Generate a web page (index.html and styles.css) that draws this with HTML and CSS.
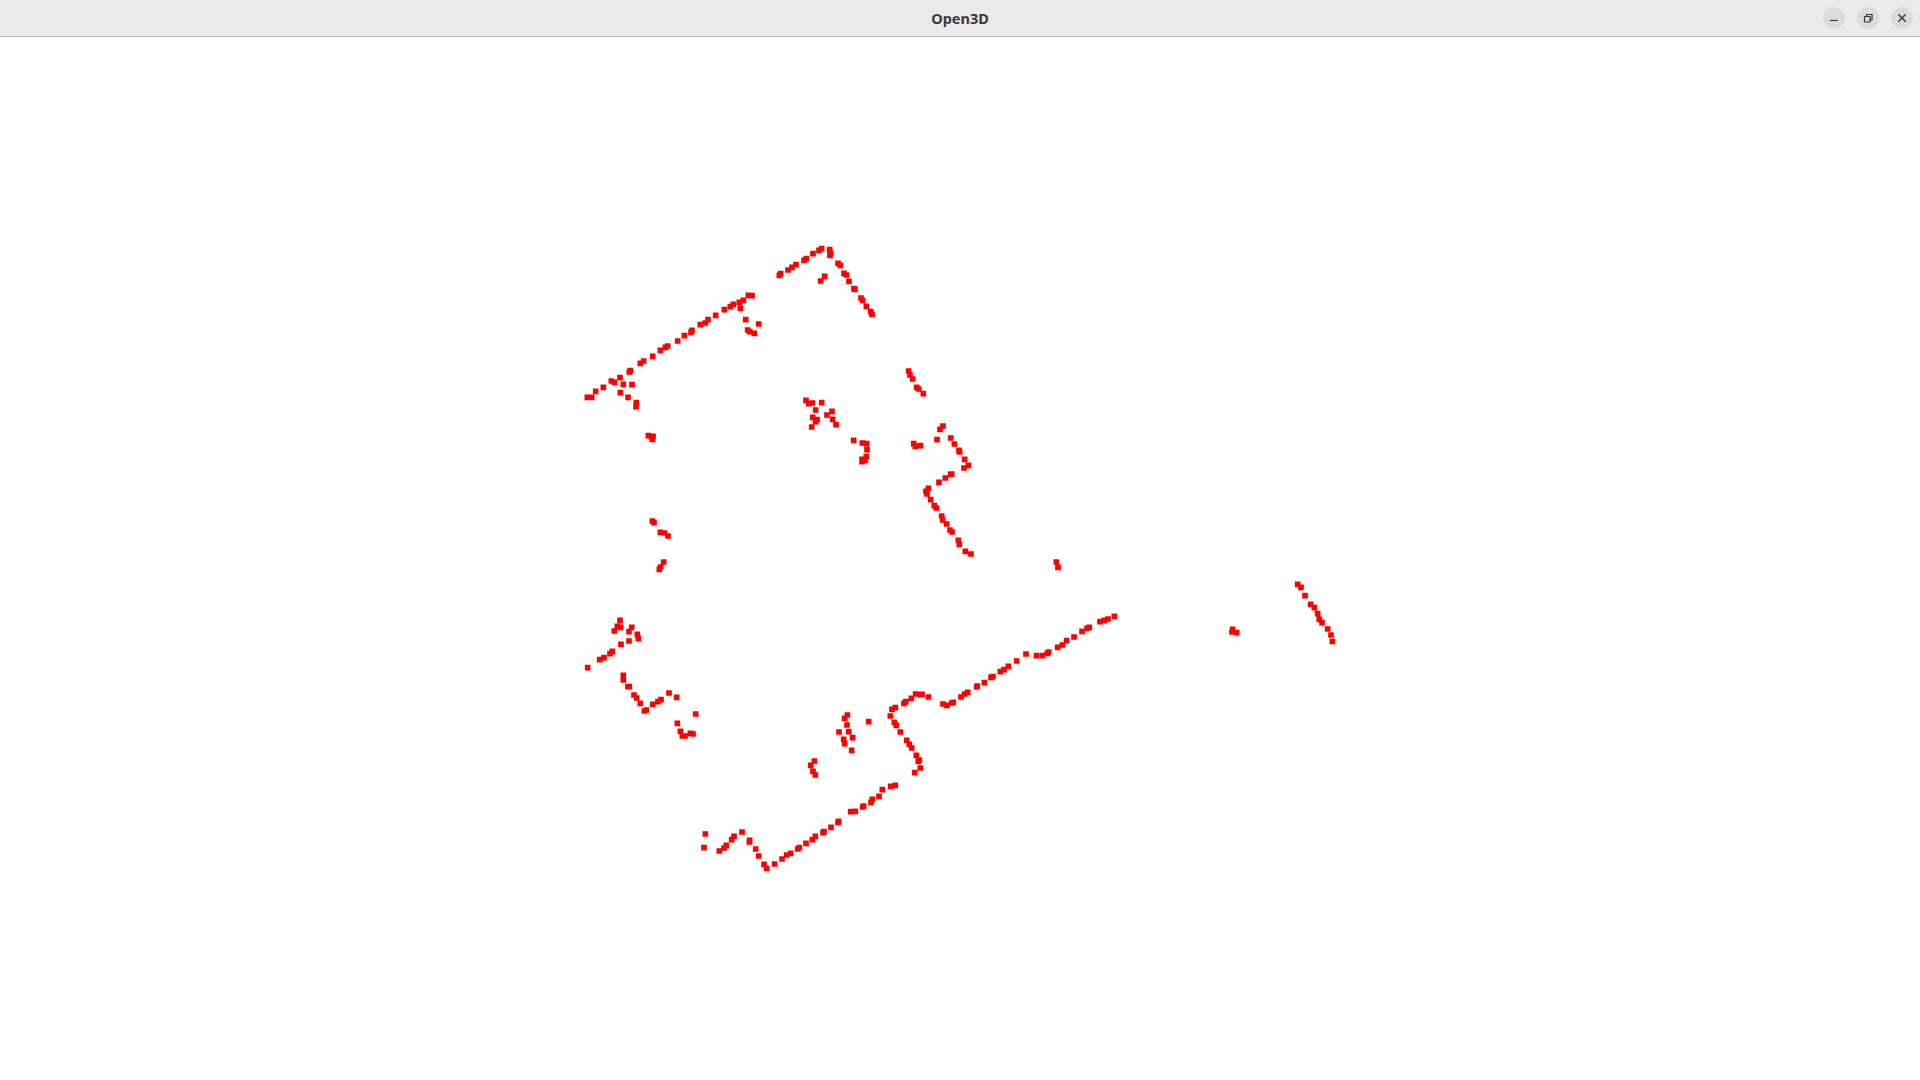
FILE: index.html
```html
<!DOCTYPE html>
<html lang="en">
<head>
  <meta charset="UTF-8" />
  <title>Open3D</title>
  <link rel="stylesheet" href="styles.css">
</head>
<body>

  <header class="titlebar">
    <div class="title">Open3D</div>
    <div class="controls">
      <div class="ctrl">
        <svg width="22" height="22" viewBox="0 0 22 22"><path d="M7 13.500h8"/></svg>
      </div>
      <div class="ctrl">
        <svg width="22" height="22" viewBox="0 0 22 22"><path d="M7.500 9.500h5.500v5.500h-5.500zM9.500 9.500v-2h5.500v5.500h-2"/></svg>
      </div>
      <div class="ctrl">
        <svg class="close" width="22" height="22" viewBox="0 0 22 22"><path d="M7.300 7.300l7.400 7.400M14.700 7.300l-7.400 7.400"/></svg>
      </div>
    </div>
  </header>

  <!-- viewBox keeps screen coordinates, each group holds one traced area at 3x -->
  <svg class="cloud" viewBox="0 37 1920 1043">
    <g class="pts" transform="translate(570 230) scale(.33333)">
      <path d="M628 136h0M632 131h0M654 120h0M666 112h0M678 104h0M702 91h0M709 86h0M729 71h0M747 61h0M755 56h0M779 59h0M782 70h0M780 76h0M804 100h0M811 106h0M822 130h0M829 135h0M837 154h0M852 176h0M855 178h0M873 204h0M878 211h0M889 229h0M902 245h0M906 253h0M764 139h0M752 153h0"/>
      <path d="M535 196h0M546 197h0M520 211h0M508 217h0M490 223h0M481 230h0M463 239h0M511 235h0M437 256h0M414 269h0M406 279h0M391 284h0M366 301h0M363 307h0M343 317h0M323 333h0M293 348h0M286 352h0M271 361h0M248 379h0M221 393h0M211 400h0M181 422h0M178 426h0M150 443h0M124 453h0M133 457h0M160 463h0M186 464h0M100 472h0M77 484h0M65 502h0M52 502h0M151 488h0M174 502h0M199 518h0M198 530h0M527 269h0M566 282h0M533 300h0M539 305h0M553 310h0M235 617h0M249 619h0M247 628h0M244 620h0"/>
    </g>
    <g class="pts" transform="translate(760 360) scale(.33333)">
      <path d="M446 33h0M450 45h0M458 57h0M470 82h0M476 87h0M490 101h0"/>
      <path d="M138 121h0M146 131h0M157 129h0M185 128h0M167 150h0M216 154h0M201 165h0M158 172h0M171 179h0M218 178h0M167 185h0M228 194h0M155 201h0"/>
      <path d="M281 241h0M307 249h0M320 251h0M321 269h0M319 290h0M315 301h0M306 298h0M306 305h0"/>
      <path d="M549 198h0M540 208h0M531 239h0M461 251h0M466 259h0M481 257h0M572 234h0M583 252h0M597 271h0M599 276h0M614 298h0M625 316h0M612 324h0M575 342h0M572 343h0M556 354h0M537 367h0M505 385h0M498 394h0M501 402h0M512 419h0M523 437h0M529 444h0M545 468h0M548 480h0M560 492h0M570 510h0M576 516h0M595 541h0M598 553h0M616 574h0M633 582h0M889 606h0M894 622h0"/>
    </g>
    <g class="pts" transform="translate(570 500) scale(.33333)">
      <path d="M247 63h0M252 68h0M271 97h0M284 99h0M294 108h0M281 186h0M272 201h0M268 208h0"/>
      <path d="M150 361h0M142 379h0M152 382h0M133 393h0M185 382h0M177 395h0M202 403h0M205 416h0M177 423h0M153 433h0M127 454h0M120 461h0M102 473h0M89 479h0M53 503h0"/>
      <path d="M160 526h0M160 540h0M174 560h0M178 560h0M192 585h0M200 594h0M211 610h0M229 630h0M223 633h0M248 613h0M264 605h0M273 599h0M297 579h0M320 592h0M377 642h0M322 670h0M331 694h0M337 708h0M345 708h0M361 700h0M369 702h0"/>
    </g>
    <g class="pts" transform="translate(680 690) scale(.33333)">
      <path d="M502 75h0M494 85h0M501 105h0M477 126h0M506 125h0M518 143h0M491 148h0M494 161h0M515 181h0M566 95h0"/>
      <path d="M403 213h0M392 226h0M399 244h0M406 255h0"/>
      <path d="M646 286h0M632 289h0M607 299h0M597 319h0M577 328h0M573 337h0M551 348h0M548 351h0M526 364h0M512 365h0M476 394h0M474 398h0M453 412h0M432 425h0M429 428h0M406 439h0M397 449h0M378 460h0M358 473h0M353 477h0M332 490h0M320 495h0M306 507h0M284 522h0M260 535h0M252 523h0M236 498h0M227 477h0M209 451h0M208 456h0M186 426h0M162 439h0M155 449h0M139 466h0M132 474h0M118 483h0M76 432h0M72 473h0"/>
    </g>
    <g class="pts" transform="translate(880 600) scale(.33333)">
      <path d="M46 323h0M36 328h0M31 348h0M43 367h0M49 376h0M61 396h0M80 421h0M88 433h0M95 444h0M109 466h0M118 480h0M115 484h0M121 504h0M104 518h0M72 310h0M77 305h0M94 295h0M107 282h0M122 284h0M126 283h0M145 291h0"/>
      <path d="M189 312h0M201 316h0M215 309h0M220 307h0M243 291h0M254 282h0M263 277h0M290 261h0M292 258h0M313 248h0M333 232h0M339 230h0M361 215h0M372 209h0M385 199h0M410 183h0M438 162h0M470 167h0M488 167h0M502 160h0M506 156h0M533 142h0M547 135h0M560 122h0M582 111h0M606 94h0M621 85h0M628 82h0M660 65h0M673 61h0M684 57h0M703 49h0"/>
    </g>
    <g class="pts" transform="translate(1040 540) scale(.33333)">
      <path d="M578 268h0M576 276h0M590 278h0"/>
      <path d="M773 133h0M783 142h0M795 167h0M812 193h0M823 203h0M833 221h0M838 238h0M846 248h0M863 267h0M873 285h0M877 304h0"/>
    </g>
  </svg>

</body>
</html>
```

FILE: styles.css
```css
html, body {
  margin: 0;
  height: 100%;
  background: #fff;
  overflow: hidden;
}
body {
  display: flex;
  flex-direction: column;
}
.titlebar {
  display: grid;
  grid-template-columns: 1fr auto 1fr;
  align-items: center;
  height: 36px;
  flex: none;
  background: #ebebeb;
  border-bottom: 1px solid #b8b8b8;
  font-family: "Noto Sans", sans-serif;
}
.title {
  grid-column: 2;
  font-size: 14.5px;
  font-weight: 700;
  color: #3a3a3a;
}
.controls {
  grid-column: 3;
  justify-self: end;
  display: flex;
  gap: 12px;
  padding-right: 7px;
}
.ctrl {
  width: 22px;
  height: 22px;
  border-radius: 50%;
  background: #dcdcdc;
}
.ctrl svg {
  display: block;
  fill: none;
  stroke: #3a3a3a;
  stroke-width: 1.2;
}
.ctrl .close {
  stroke-width: 1.5;
}
.cloud {
  display: block;
  flex: 1;
  width: 1920px;
}
.pts path {
  fill: none;
  stroke: #f00;
  stroke-width: 17;
  stroke-linecap: square;
}
```
